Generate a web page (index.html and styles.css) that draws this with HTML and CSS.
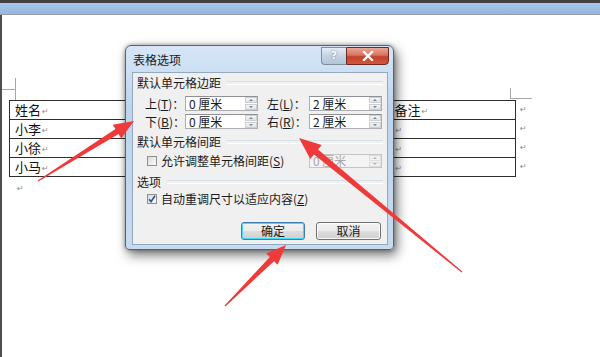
FILE: index.html
```html
<!DOCTYPE html>
<html lang="zh-CN">
<head>
<meta charset="utf-8">
<title>表格选项</title>
<link rel="stylesheet" href="styles.css">
</head>
<body>
<div class="app">
  <div class="titlestrip"></div>
  <div class="ribbon"></div>
  <div class="workspace">
    <div class="leftedge"></div>
    <div class="page">
      <div class="marks">
        <div class="mark-left"></div>
        <div class="mark-right"></div>
      </div>
      <div class="doc-row">
        <div class="doc-table">
          <div class="cell">姓名<span class="ret">↵</span></div>
          <div class="cell"><span class="ret">↵</span></div>
          <div class="cell"><span class="ret">↵</span></div>
          <div class="cell">备注<span class="ret">↵</span></div>
          <div class="cell">小李<span class="ret">↵</span></div>
          <div class="cell"><span class="ret">↵</span></div>
          <div class="cell"><span class="ret">↵</span></div>
          <div class="cell"><span class="ret">↵</span></div>
          <div class="cell">小徐<span class="ret">↵</span></div>
          <div class="cell"><span class="ret">↵</span></div>
          <div class="cell"><span class="ret">↵</span></div>
          <div class="cell"><span class="ret">↵</span></div>
          <div class="cell">小马<span class="ret">↵</span></div>
          <div class="cell"><span class="ret">↵</span></div>
          <div class="cell"><span class="ret">↵</span></div>
          <div class="cell"><span class="ret">↵</span></div>
        </div>
        <div class="row-ends">
          <span class="ret">↵</span>
          <span class="ret">↵</span>
          <span class="ret">↵</span>
          <span class="ret">↵</span>
        </div>
      </div>
      <div class="para"><span class="ret">↵</span></div>
    </div>
  </div>

  <div class="dialog">
    <div class="dlg-title">
      <span class="dlg-caption">表格选项</span>
      <div class="caption-btns">
        <div class="cap-help">?</div>
        <div class="cap-close">
          <svg width="12" height="10" viewBox="0 0 12 10"><path d="M2 1 L10 9 M10 1 L2 9" stroke="#fff" stroke-width="2.4" stroke-linecap="square"/></svg>
        </div>
      </div>
    </div>
    <div class="client">
      <div class="section">默认单元格边距</div>
      <div class="field-row">
        <span class="flabel">上(<u>T</u>)：</span>
        <div class="spin"><span class="spin-text">0 厘米</span><div class="spin-btns"><span class="up"></span><span class="down"></span></div></div>
        <span class="flabel flabel-r">左(<u>L</u>)：</span>
        <div class="spin"><span class="spin-text">2 厘米</span><div class="spin-btns"><span class="up"></span><span class="down"></span></div></div>
      </div>
      <div class="field-row row2">
        <span class="flabel">下(<u>B</u>)：</span>
        <div class="spin"><span class="spin-text">0 厘米</span><div class="spin-btns"><span class="up"></span><span class="down"></span></div></div>
        <span class="flabel flabel-r">右(<u>R</u>)：</span>
        <div class="spin"><span class="spin-text">2 厘米</span><div class="spin-btns"><span class="up"></span><span class="down"></span></div></div>
      </div>
      <div class="section sec2">默认单元格间距</div>
      <div class="check-row">
        <span class="checkbox"></span>
        <span class="check-label">允许调整单元格间距(<u>S</u>)</span>
        <div class="spin disabled"><span class="spin-text">0 厘米</span><div class="spin-btns"><span class="up"></span><span class="down"></span></div></div>
      </div>
      <div class="section sec3">选项</div>
      <div class="check-row row-opt">
        <span class="checkbox checked">
          <svg width="8" height="8" viewBox="0 0 8 8"><path d="M1 4.2 L3 6.6 L7 0.8" fill="none" stroke="#2b4f9e" stroke-width="1.6"/></svg>
        </span>
        <span class="check-label">自动重调尺寸以适应内容(<u>Z</u>)</span>
      </div>
      <div class="buttons">
        <div class="btn btn-default">确定</div>
        <div class="btn">取消</div>
      </div>
    </div>
  </div>

  <svg class="arrows" width="600" height="357" viewBox="0 0 600 357">
    <polygon points="38.3,181.5 118.6,134.1 121.2,138.4 134,121 112.8,124.8 115.4,129.1 37.7,180.5" fill="#f03a3a"/>
    <polygon points="462.4,271.5 318.0,149.5 321.7,145.0 299,138 310.3,159.0 314.0,154.5 461.6,272.5" fill="#f03a3a"/>
    <polygon points="225.4,306.4 274.0,261.2 277.6,264.8 286,245 266.2,253.4 269.8,257.0 224.6,305.6" fill="#f03a3a"/>
  </svg>
</div>
</body>
</html>
```

FILE: styles.css
```css
* { box-sizing: border-box; }
html, body { margin: 0; padding: 0; }
body {
  width: 600px;
  height: 357px;
  overflow: hidden;
  background: #fff;
  font-family: "Noto Sans CJK SC", "Noto Sans", sans-serif;
}
.app {
  position: relative;
  width: 600px;
  height: 357px;
  display: flex;
  flex-direction: column;
}
.titlestrip { height: 3px; background: #424242; }
.ribbon {
  height: 12px;
  background: linear-gradient(#a9c7ec, #93b5e0);
  border-bottom: 1px solid #9c9c9c;
}
.workspace { flex: 1; display: flex; }
.leftedge { width: 2px; background: #4e4e4e; }
.page { flex: 1; background: #fff; padding-left: 7px; }

.marks { display: flex; margin-top: 63px; margin-left: -7px; height: 22px; }
.mark-left {
  width: 14px;
  height: 22px;
  border-right: 1px solid #a8a8a8;
  background: linear-gradient(#a8a8a8, #a8a8a8) no-repeat 0 11px / 100% 1px;
}
.mark-right {
  width: 22px;
  height: 11px;
  margin-top: 10px;
  margin-left: 494px;
  border-left: 1px solid #a8a8a8;
  border-bottom: 1px solid #a8a8a8;
}

.doc-row { display: flex; }
.doc-table {
  width: 507px;
  display: grid;
  grid-template-columns: repeat(4, 1fr);
  border-left: 1px solid #2e2e2e;
  border-top: 1px solid #2e2e2e;
}
.cell {
  height: 19px;
  border-right: 1px solid #2e2e2e;
  border-bottom: 1px solid #2e2e2e;
  padding-left: 5px;
  font-size: 13px;
  line-height: 18px;
  color: #111;
  white-space: nowrap;
}
.ret {
  font-family: "DejaVu Sans", sans-serif;
  font-size: 8px;
  line-height: 10px;
  color: #8c8c8c;
  margin-left: 1px;
  vertical-align: 1px;
}
.row-ends {
  display: flex;
  flex-direction: column;
  padding-top: 1px;
  margin-left: 3px;
}
.row-ends .ret { height: 19px; line-height: 18px; }
.para { padding-left: 7px; height: 16px; line-height: 16px; }

/* dialog */
.dialog {
  position: absolute;
  left: 125px;
  top: 45px;
  width: 269px;
  height: 205px;
  border: 1px solid #57636f;
  border-radius: 6px 6px 4px 4px;
  background: linear-gradient(#d6e6f7, #bed5ee 30%, #c6daf0);
  box-shadow: 3px 5px 12px rgba(0,0,0,0.55), 0 0 4px rgba(0,0,0,0.35);
  display: flex;
  flex-direction: column;
}
.dlg-title {
  height: 26px;
  display: flex;
  align-items: center;
  padding-left: 7px;
}
.dlg-caption { font-size: 12px; line-height: 14px; color: #1a1a1a; margin-top: 2px; }
.caption-btns {
  margin-left: auto;
  margin-right: 4px;
  align-self: flex-start;
  display: flex;
  margin-top: 1px;
}
.cap-help {
  width: 25px;
  height: 18px;
  border: 1px solid #7f8d9c;
  border-right: none;
  border-radius: 0 0 0 4px;
  background: linear-gradient(#e4edf6, #c3d3e3 50%, #b3c6d9);
  color: #fff;
  font-family: "DejaVu Sans", sans-serif;
  font-weight: bold;
  font-size: 11px;
  line-height: 16px;
  text-align: center;
  text-shadow: 0 0 2px #5b6b7c;
}
.cap-close {
  width: 43px;
  height: 18px;
  border: 1px solid #6d2a22;
  border-radius: 0 0 4px 0;
  background: linear-gradient(#e9a896, #d7735f 45%, #c2402a 55%, #d2583e);
  display: flex;
  align-items: center;
  justify-content: center;
}
.client {
  flex: 1;
  margin: 0 5px 4px 6px;
  border: 1px solid #94a8bf;
  background: #f0f0f0;
  padding-top: 3px;
  font-size: 12px;
  line-height: 14px;
  color: #1a1a1a;
  display: flex;
  flex-direction: column;
}
.section {
  height: 14px;
  display: flex;
  align-items: center;
  padding-left: 4px;
  margin-right: 4px;
  gap: 6px;
}
.section::after {
  content: "";
  flex: 1;
  height: 2px;
  border-top: 1px solid #d5dfe7;
  border-bottom: 1px solid #ffffff;
}
.sec2 { margin-top: 6px; }
.sec3 { margin-top: 7px; }
.field-row {
  height: 15px;
  margin-top: 6px;
  display: flex;
  align-items: center;
  padding-left: 12px;
}
.row2 { margin-top: 3px; }
.flabel { width: 40px; white-space: nowrap; }
.flabel-r { width: 42px; margin-left: 9px; }
u { text-decoration: underline; text-underline-offset: 1px; }
.spin {
  width: 73px;
  height: 15px;
  display: flex;
  border: 1px solid #abadb3;
  border-top-color: #8e9095;
  background: #fff;
}
.spin-text { flex: 1; padding-left: 3px; line-height: 13px; white-space: nowrap; }
.spin-btns {
  width: 12px;
  display: flex;
  flex-direction: column;
  gap: 1px;
}
.spin-btns span {
  flex: 1;
  background: linear-gradient(#f6f6f6, #e2e2e2);
  border: 1px solid #cfcfcf;
  display: flex;
  align-items: center;
  justify-content: center;
}
.spin-btns .up::before {
  content: "";
  border-left: 2px solid transparent;
  border-right: 2px solid transparent;
  border-bottom: 2px solid #6d87a8;
}
.spin-btns .down::before {
  content: "";
  border-left: 2px solid transparent;
  border-right: 2px solid transparent;
  border-top: 2px solid #6d87a8;
}
.spin.disabled { border-color: #c5c5c5; background: #f4f4f4; margin-left: auto; margin-right: 5px; height: 14px; }
.spin.disabled .spin-text { color: #a7a7a7; line-height: 12px; }
.spin.disabled .spin-btns span { background: #f1f1f1; border-color: #dcdcdc; }
.spin.disabled .spin-btns .up::before { border-bottom-color: #b5b5b5; }
.spin.disabled .spin-btns .down::before { border-top-color: #b5b5b5; }

.check-row {
  height: 14px;
  margin-top: 5px;
  display: flex;
  align-items: center;
  padding-left: 14px;
}
.row-opt { margin-top: 2px; height: 16px; }
.checkbox {
  width: 10px;
  height: 10px;
  border: 1px solid #8f8f8f;
  background: linear-gradient(135deg, #dcdcdc, #fbfbfb);
  display: flex;
  align-items: center;
  justify-content: center;
}
.check-label { margin-left: 4px; white-space: nowrap; }
.buttons {
  margin-top: 15px;
  display: flex;
  justify-content: flex-end;
  gap: 11px;
  padding-right: 6px;
}
.btn {
  width: 65px;
  height: 18px;
  border: 1px solid #707070;
  border-radius: 3px;
  background: linear-gradient(#f3f3f3, #ebebeb 48%, #dddddd 52%, #cfcfcf);
  text-align: center;
  line-height: 16px;
  font-size: 12px;
  box-shadow: inset 0 0 0 1px #fcfcfc;
}
.btn-default {
  width: 64px;
  border-color: #3c7fb1;
  box-shadow: inset 0 0 0 1px #48d8f8;
}

.arrows {
  position: absolute;
  left: 0;
  top: 0;
  pointer-events: none;
}
```
